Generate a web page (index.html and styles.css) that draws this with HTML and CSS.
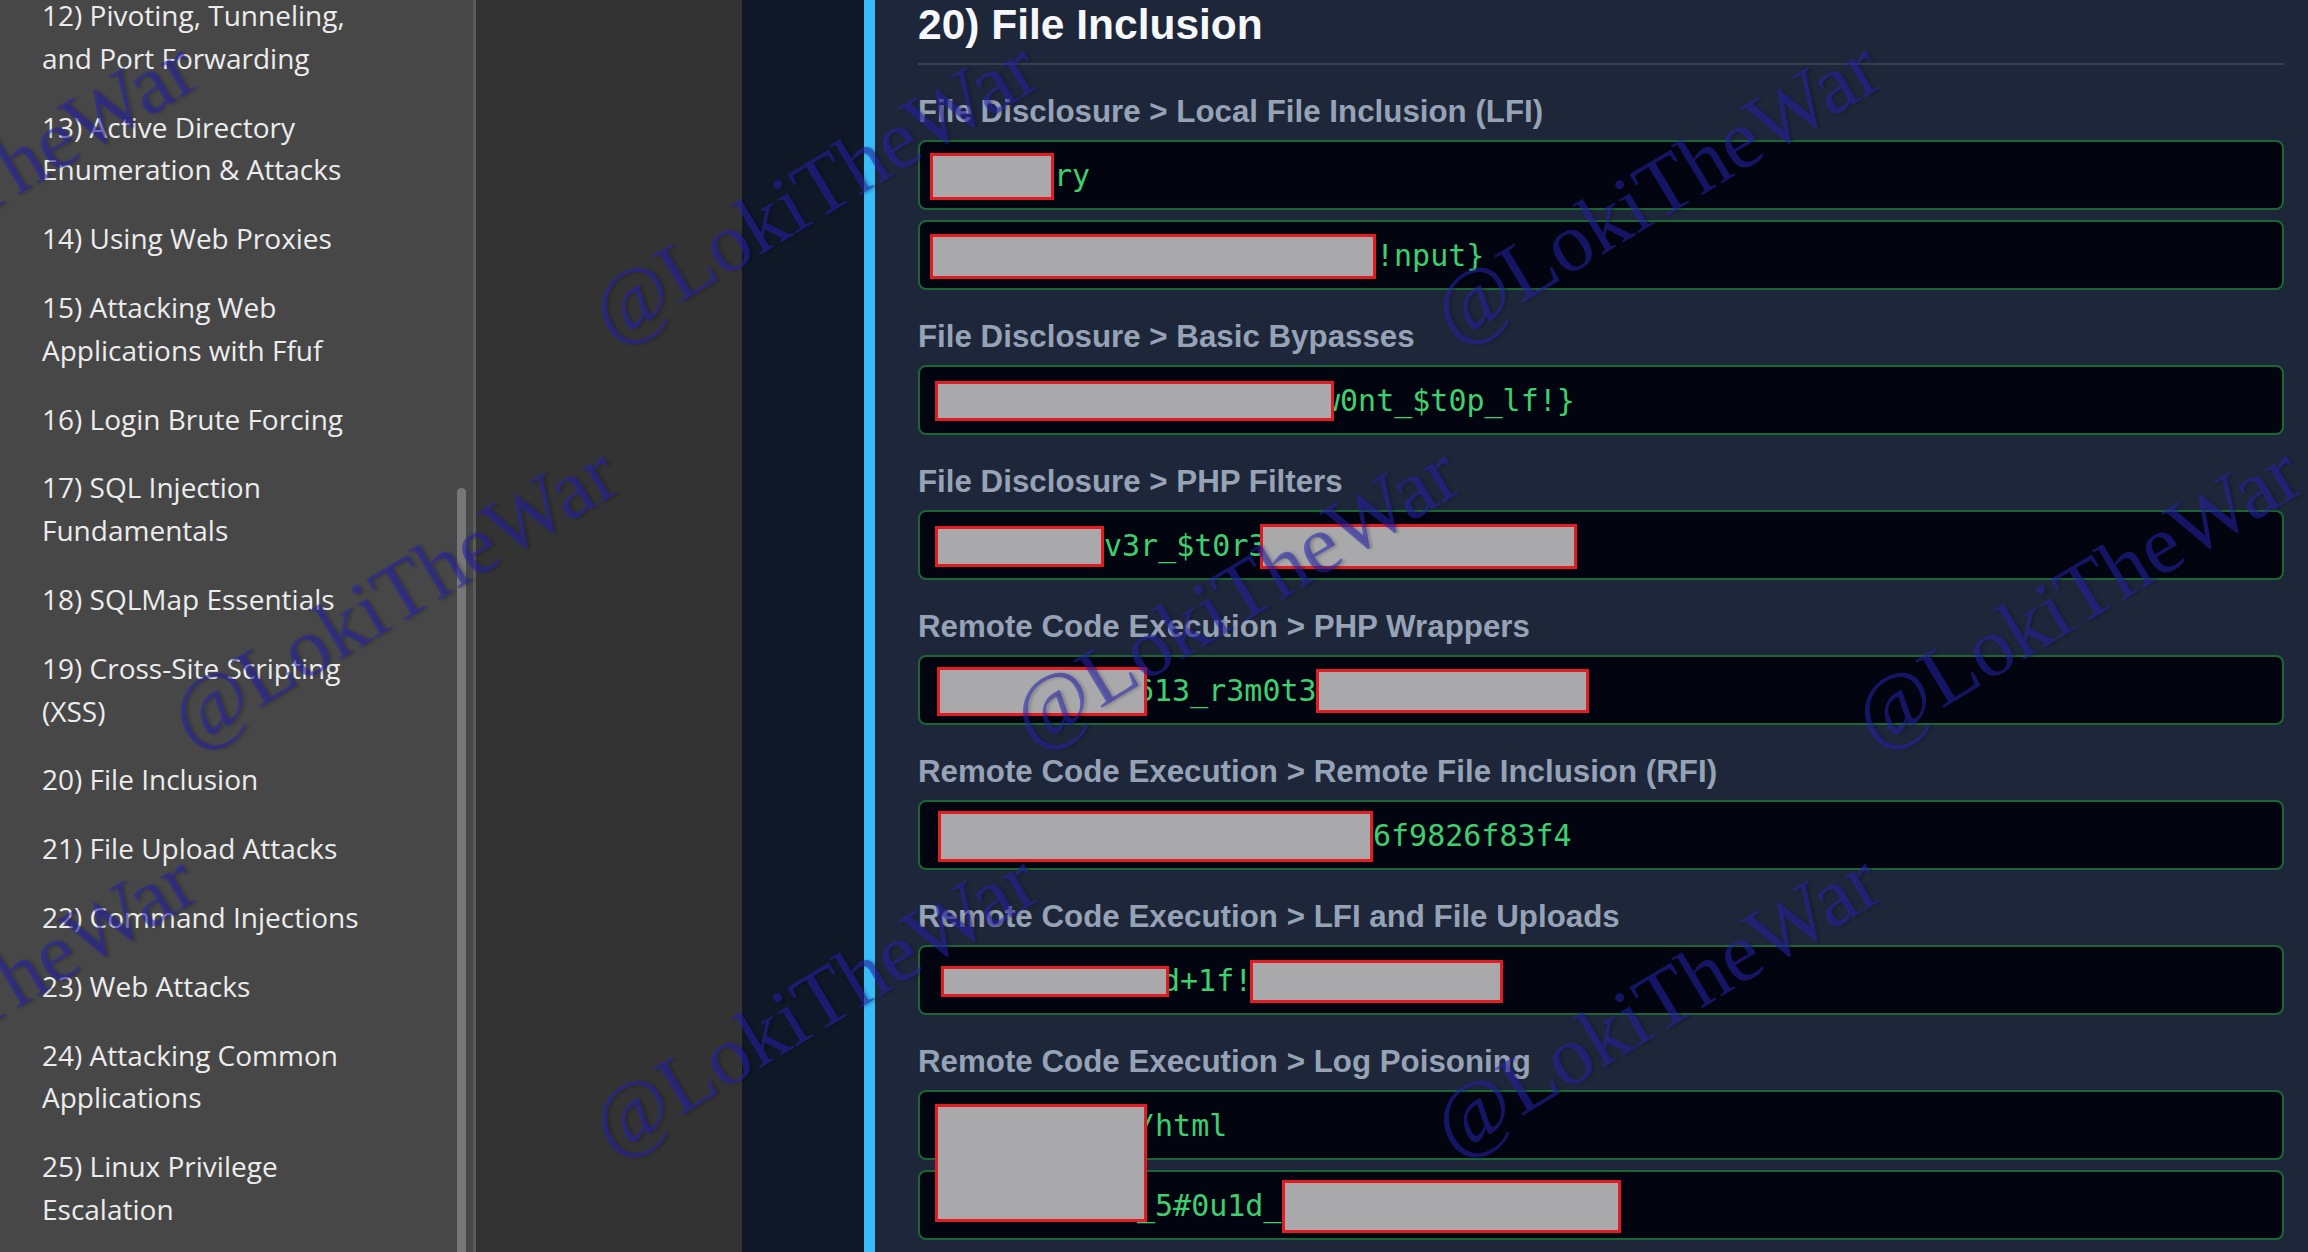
FILE: index.html
```html
<!DOCTYPE html>
<html lang="en">

<head>
    <meta charset="UTF-8">
    <meta name="viewport" content="width=device-width, initial-scale=1.0">
    <link rel="stylesheet" href="styles.css">
    <title>20) File Inclusion</title>
</head>

<body>
    <aside class="sidebar">
        <ul class="toc">
            <li>12) Pivoting, Tunneling, and Port Forwarding</li>
            <li>13) Active Directory Enumeration &amp; Attacks</li>
            <li>14) Using Web Proxies</li>
            <li>15) Attacking Web Applications with Ffuf</li>
            <li>16) Login Brute Forcing</li>
            <li>17) SQL Injection Fundamentals</li>
            <li>18) SQLMap Essentials</li>
            <li>19) Cross-Site Scripting (XSS)</li>
            <li>20) File Inclusion</li>
            <li>21) File Upload Attacks</li>
            <li>22) Command Injections</li>
            <li>23) Web Attacks</li>
            <li>24) Attacking Common Applications</li>
            <li>25) Linux Privilege Escalation</li>
        </ul>
        <div class="scrollbar">
            <div class="thumb"></div>
        </div>
    </aside>
    <div class="divider"></div>
    <div class="gutter"></div>

    <main class="page">
        <article class="panel">
            <h2>20) File Inclusion</h2>

            <div class="tasks">
                <section class="task">
                    <h3>File Disclosure &gt; Local File Inclusion (LFI)</h3>
                    <div class="answer"><span class="redact" style="width:124px;height:47px"></span><span>ry</span></div>
                    <div class="answer"><span class="redact" style="width:446px;height:45px"></span><span>!nput}</span></div>
                </section>

                <section class="task">
                    <h3>File Disclosure &gt; Basic Bypasses</h3>
                    <div class="answer"><span class="redact" style="width:399px;height:40px;margin-left:5px;margin-right:-12px"></span><span>w0nt_$t0p_lf!}</span></div>
                </section>

                <section class="task">
                    <h3>File Disclosure &gt; PHP Filters</h3>
                    <div class="answer"><span class="redact" style="width:169px;height:41px;margin-left:5px"></span><span>v3r_$t0r3</span><span class="redact" style="width:317px;height:45px;margin-left:-7px"></span></div>
                </section>

                <section class="task">
                    <h3>Remote Code Execution &gt; PHP Wrappers</h3>
                    <div class="answer"><span class="redact" style="width:210px;height:49px;margin-left:7px;margin-right:-11px"></span><span>613_r3m0t3</span><span class="redact" style="width:273px;height:44px;margin-left:-1px"></span></div>
                </section>

                <section class="task">
                    <h3>Remote Code Execution &gt; Remote File Inclusion (RFI)</h3>
                    <div class="answer"><span class="redact" style="width:435px;height:51px;margin-left:8px"></span><span>6f9826f83f4</span></div>
                </section>

                <section class="task">
                    <h3>Remote Code Execution &gt; LFI and File Uploads</h3>
                    <div class="answer"><span class="redact" style="width:228px;height:31px;margin-left:11px;margin-right:-7px"></span><span>d+1f!</span><span class="redact" style="width:253px;height:43px;margin-left:-2px"></span></div>
                </section>

                <section class="task">
                    <h3>Remote Code Execution &gt; Log Poisoning</h3>
                    <div class="answer"><span class="redact tall" style="width:212px;height:118px;margin-left:5px;margin-right:-10px"></span><span>/html</span></div>
                    <div class="answer"><span class="redact ghost" style="width:212px;margin-left:5px;margin-right:-10px"></span><span>_5#0u1d_</span><span class="redact" style="width:339px;height:53px"></span></div>
                </section>
            </div>
        </article>
    </main>

    <div class="watermarks">
        <span class="mark" style="left:-28px;top:190px">@LokiTheWar</span>
        <span class="mark" style="left:814px;top:190px">@LokiTheWar</span>
        <span class="mark" style="left:1656px;top:190px">@LokiTheWar</span>
        <span class="mark" style="left:393px;top:595px">@LokiTheWar</span>
        <span class="mark" style="left:1235px;top:595px">@LokiTheWar</span>
        <span class="mark" style="left:2077px;top:595px">@LokiTheWar</span>
        <span class="mark" style="left:-28px;top:1003px">@LokiTheWar</span>
        <span class="mark" style="left:814px;top:1003px">@LokiTheWar</span>
        <span class="mark" style="left:1656px;top:1003px">@LokiTheWar</span>
    </div>
</body>

</html>
```

FILE: styles.css
```css
html,
body {
    height: 100%;
}

body {
    margin: 0;
    display: flex;
    overflow: hidden;
    background-color: #101727;
    font-family: "Liberation Sans", Arial, sans-serif;
}

/* left reader sidebar */
.sidebar {
    width: 473px;
    flex-shrink: 0;
    display: flex;
    background-color: #474747;
}

.toc {
    flex: 1;
    list-style: none;
    margin: -6px 0 0;
    padding: 0 70px 0 42px;
    display: flex;
    flex-direction: column;
    gap: 26px;
    font-family: "Open Sans", "Noto Sans", sans-serif;
    font-size: 28px;
    line-height: 42.8px;
    color: #ececec;
}

.scrollbar {
    width: 16px;
    padding-top: 488px;
}

.thumb {
    width: 9px;
    height: 100%;
    border-radius: 5px 5px 0 0;
    background-color: #777777;
}

.divider {
    width: 3px;
    flex-shrink: 0;
    background-color: #5c5c5c;
}

.gutter {
    width: 266px;
    flex-shrink: 0;
    background-color: #333333;
}

/* main page */
.page {
    flex: 1;
    padding-left: 122px;
}

.panel {
    height: 100%;
    box-sizing: border-box;
    background-color: #1e2739;
    border-left: 11px solid #38bdf8;
    padding: 0 24px 0 43px;
}

.panel h2 {
    margin: 0 0 28px;
    padding-bottom: 13px;
    border-bottom: 2px solid #354052;
    font-size: 42.5px;
    line-height: 50px;
    font-weight: bold;
    color: #f5f7fa;
}

.tasks {
    display: flex;
    flex-direction: column;
    gap: 28px;
}

.task {
    display: flex;
    flex-direction: column;
    gap: 10px;
}

.task h3 {
    margin: 0;
    font-size: 31.3px;
    line-height: 37px;
    font-weight: bold;
    color: #96a2b6;
}

.answer {
    height: 70px;
    box-sizing: border-box;
    display: flex;
    align-items: center;
    padding: 2px 0 0 10px;
    border: 2px solid #1b6636;
    border-radius: 8px;
    background-color: #02050f;
    font-family: "DejaVu Sans Mono", "Liberation Mono", monospace;
    font-size: 30px;
    line-height: 36px;
    color: #3ecf6f;
    white-space: pre;
}

/* censored parts */
.redact {
    flex-shrink: 0;
    box-sizing: border-box;
    height: 46px;
    border: 3px solid #e31b22;
    background-color: #a9a9ab;
    z-index: 1;
}

.redact.tall {
    align-self: flex-start;
    margin-top: 10px;
    z-index: 2;
}

.redact.ghost {
    visibility: hidden;
}

/* watermark layer */
.watermarks {
    position: fixed;
    inset: 0;
    pointer-events: none;
    overflow: hidden;
    z-index: 10;
}

.mark {
    position: absolute;
    transform: translate(-50%, -50%) rotate(-31deg);
    font-family: "Liberation Serif", "Times New Roman", serif;
    font-size: 84px;
    line-height: 1;
    white-space: nowrap;
    color: rgba(38, 34, 175, 0.55);
    text-shadow: 2px 2px 3px rgba(0, 0, 0, 0.2);
}
```
